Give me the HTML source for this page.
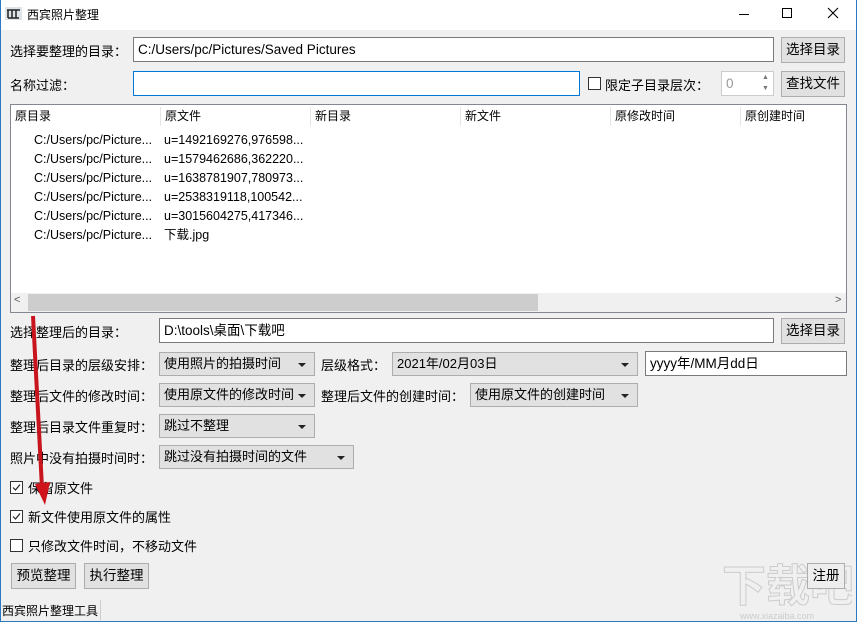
<!DOCTYPE html>
<html><head><meta charset="utf-8"><style>
*{box-sizing:border-box;margin:0;padding:0}
html,body{width:857px;height:622px;overflow:hidden}
body{background:#f0f0f0;font-family:"Liberation Sans","Noto Sans CJK SC",sans-serif;font-size:13px;color:#000;position:relative}
.a{position:absolute;white-space:nowrap}
.in{position:absolute;background:#fff;border:1px solid #7a7a7a;padding:2px 4px;line-height:19px;font-size:13.5px}
.bt{position:absolute;background:#e1e1e1;border:1px solid #adadad;text-align:center;font-size:13.5px;line-height:24px}
.cb{position:absolute;background:#e1e1e1;border:1px solid #adadad;font-size:13px;line-height:22px;padding-left:4px;overflow:hidden}
.cb:after{content:"";position:absolute;right:8px;top:10px;border-left:4px solid transparent;border-right:4px solid transparent;border-top:4px solid #222}
.lb{position:absolute;font-size:13px;white-space:nowrap}
.ck{position:absolute;width:13px;height:13px;border:1px solid #333;background:#fff}
</style></head><body>
<div class="a" style="left:0;top:0;width:857px;height:30px;background:#fff"></div>
<div class="a" style="left:0;top:0;width:1px;height:622px;background:#2b79c1"></div>
<div class="a" style="right:0;top:0;width:1px;height:622px;background:#2b79c1"></div>
<div class="a" style="left:0;bottom:0;width:857px;height:1px;background:#2b79c1"></div>
<svg class="a" style="left:5px;top:7px" width="17" height="13"><rect width="17" height="13" fill="#dfe4e8"/><path d="M2 3H15M3 3V11M7 3V11M11 3V11M3 11H14" stroke="#222" stroke-width="1.5" fill="none"/></svg>
<div class="a" style="left:27px;top:6px;font-size:12px">西宾照片整理</div>
<div class="a" style="left:739px;top:14px;width:10px;height:1px;background:#000"></div>
<div class="a" style="left:782px;top:8px;width:10px;height:10px;border:1px solid #000"></div>
<svg class="a" style="left:827px;top:7px" width="12" height="12"><path d="M1 1L11 11M11 1L1 11" stroke="#000" stroke-width="1.1"/></svg>

<div class="lb" style="left:10px;top:41px">选择要整理的目录：</div>
<div class="in" style="left:133px;top:37px;width:641px;height:25px">C:/Users/pc/Pictures/Saved Pictures</div>
<div class="bt" style="left:781px;top:37px;width:64px;height:26px">选择目录</div>

<div class="lb" style="left:10px;top:75px">名称过滤：</div>
<div class="in" style="left:133px;top:71px;width:447px;height:25px;border-color:#0078d7"></div>
<div class="ck" style="left:588px;top:77px"></div>
<div class="lb" style="left:605px;top:75px">限定子目录层次：</div>
<div class="in" style="left:721px;top:71px;width:53px;height:25px;border-color:#ccc;color:#999">0</div>
<div class="a" style="left:758px;top:72px;width:15px;height:23px;font-size:7px;color:#777;line-height:11px;text-align:center">▲<br>▼</div>
<div class="bt" style="left:781px;top:71px;width:64px;height:26px">查找文件</div>

<div class="a" style="left:10px;top:104px;width:837px;height:209px;background:#fff;border:1px solid #828790"></div>
<div class="a" style="left:11px;top:105px;width:835px;height:23px;font-size:12px;line-height:23px">
<span class="a" style="left:4px">原目录</span><span class="a" style="left:154px">原文件</span><span class="a" style="left:304px">新目录</span><span class="a" style="left:454px">新文件</span><span class="a" style="left:604px">原修改时间</span><span class="a" style="left:734px">原创建时间</span>
<div class="a" style="left:149px;top:2px;width:1px;height:19px;background:#e5e5e5"></div>
<div class="a" style="left:299px;top:2px;width:1px;height:19px;background:#e5e5e5"></div>
<div class="a" style="left:449px;top:2px;width:1px;height:19px;background:#e5e5e5"></div>
<div class="a" style="left:599px;top:2px;width:1px;height:19px;background:#e5e5e5"></div>
<div class="a" style="left:729px;top:2px;width:1px;height:19px;background:#e5e5e5"></div>
</div>
<div class="a" style="left:34px;top:131px;font-size:12.5px;line-height:19px">C:/Users/pc/Picture...<br>C:/Users/pc/Picture...<br>C:/Users/pc/Picture...<br>C:/Users/pc/Picture...<br>C:/Users/pc/Picture...<br>C:/Users/pc/Picture...</div>
<div class="a" style="left:164px;top:131px;font-size:12.5px;line-height:19px">u=1492169276,976598...<br>u=1579462686,362220...<br>u=1638781907,780973...<br>u=2538319118,100542...<br>u=3015604275,417346...<br>下载.jpg</div>
<div class="a" style="left:11px;top:293px;width:835px;height:19px;background:#f0f0f0"></div>
<div class="a" style="left:28px;top:294px;width:510px;height:17px;background:#cdcdcd"></div>
<div class="a" style="left:14px;top:294px;font-size:11px;color:#555">&lt;</div>
<div class="a" style="left:835px;top:294px;font-size:11px;color:#555">&gt;</div>

<div class="lb" style="left:10px;top:322px">选择整理后的目录：</div>
<div class="in" style="left:159px;top:318px;width:615px;height:25px">D:\tools\桌面\下载吧</div>
<div class="bt" style="left:781px;top:318px;width:64px;height:26px">选择目录</div>

<div class="lb" style="left:10px;top:355px">整理后目录的层级安排：</div>
<div class="cb" style="left:159px;top:352px;width:156px;height:24px">使用照片的拍摄时间</div>
<div class="lb" style="left:321px;top:355px">层级格式：</div>
<div class="cb" style="left:392px;top:352px;width:246px;height:24px">2021年/02月03日</div>
<div class="in" style="left:645px;top:351px;width:202px;height:25px">yyyy年/MM月dd日</div>

<div class="lb" style="left:10px;top:386px">整理后文件的修改时间：</div>
<div class="cb" style="left:159px;top:383px;width:156px;height:24px">使用原文件的修改时间</div>
<div class="lb" style="left:321px;top:386px">整理后文件的创建时间：</div>
<div class="cb" style="left:470px;top:383px;width:168px;height:24px">使用原文件的创建时间</div>

<div class="lb" style="left:10px;top:417px">整理后目录文件重复时：</div>
<div class="cb" style="left:159px;top:414px;width:156px;height:24px">跳过不整理</div>

<div class="lb" style="left:10px;top:448px">照片中没有拍摄时间时：</div>
<div class="cb" style="left:159px;top:445px;width:195px;height:24px">跳过没有拍摄时间的文件</div>

<div class="ck" style="left:10px;top:481px"></div><svg class="a" style="left:10px;top:481px" width="13" height="13"><path d="M3 6.5L5.5 9L10 3.5" stroke="#222" stroke-width="1.2" fill="none"/></svg>
<div class="lb" style="left:28px;top:478px">保留原文件</div>
<div class="ck" style="left:10px;top:510px"></div><svg class="a" style="left:10px;top:510px" width="13" height="13"><path d="M3 6.5L5.5 9L10 3.5" stroke="#222" stroke-width="1.2" fill="none"/></svg>
<div class="lb" style="left:28px;top:507px">新文件使用原文件的属性</div>
<div class="ck" style="left:10px;top:539px"></div>
<div class="lb" style="left:28px;top:536px">只修改文件时间，不移动文件</div>

<div class="bt" style="left:11px;top:563px;width:65px;height:26px">预览整理</div>
<div class="bt" style="left:84px;top:563px;width:65px;height:26px">执行整理</div>
<div class="a" style="left:722px;top:562px;width:130px;height:50px;overflow:hidden;font-size:44px;line-height:50px;font-weight:bold;color:transparent;-webkit-text-stroke:1px #ccc">下载吧</div>
<div class="a" style="left:740px;top:611px;font-size:9px;color:#ccc">www.xiazaiba.com</div>
<div class="bt" style="left:807px;top:563px;width:38px;height:26px;background:#eee">注册</div>

<div class="a" style="left:2px;top:602px;font-size:12px">西宾照片整理工具</div>
<div class="a" style="left:100px;top:600px;width:1px;height:20px;background:#ccc"></div>

<svg class="a" style="left:0;top:0" width="857" height="622"><path d="M33 316L42 488" stroke="#c8141c" stroke-width="4"/><path d="M35 484L50 482L45 505Z" fill="#d0141c"/></svg>
</body></html>
